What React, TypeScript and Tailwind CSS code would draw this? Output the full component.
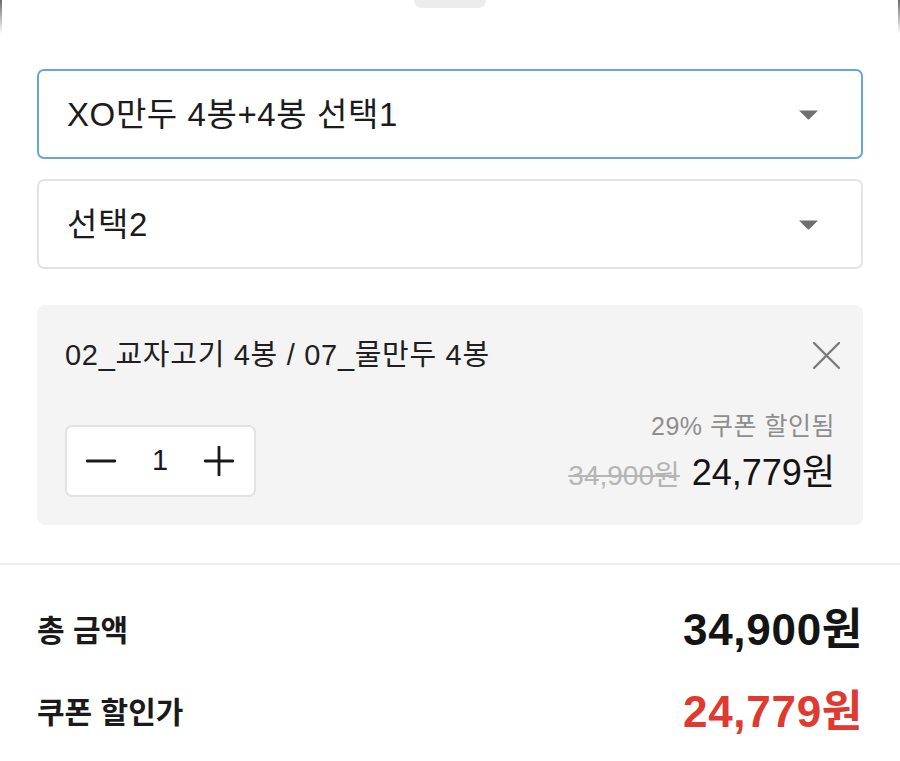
const font = {
  fontFamily: '"Liberation Sans", "Noto Sans CJK KR", "Noto Sans", sans-serif',
};

function SelectBox({ label, active }: { label: string; active?: boolean }) {
  return (
    <div
      className={
        active
          ? "flex h-[90px] items-center justify-between rounded-[7px] border-2 border-[#69a6d6] bg-white pl-[28px] pr-[42px]"
          : "flex h-[90px] items-center justify-between rounded-[7px] border-2 border-[#e3e3e3] bg-white pl-[28px] pr-[42px]"
      }
    >
      <span className="text-[33px] leading-none tracking-[0.6px] text-[#1c1c1c]">{label}</span>
      <svg width="21" height="11" viewBox="0 0 21 11">
        <path d="M1 1.5 L20 1.5 L11.2 10.2 Q10.5 10.9 9.8 10.2 Z" fill="#6f6f6f" />
      </svg>
    </div>
  );
}

function Stepper({ value }: { value: number }) {
  return (
    <div className="flex h-[72px] w-[191px] items-center justify-between rounded-[7px] border-2 border-[#e2e2e2] bg-white pl-[19px] pr-[20px]">
      <svg width="30" height="30" viewBox="0 0 30 30">
        <path d="M1 15 H29" stroke="#1a1a1a" strokeWidth="2.8" strokeLinecap="round" />
      </svg>
      <span className="text-[29px] text-[#1a1a1a]">{value}</span>
      <svg width="30" height="30" viewBox="0 0 30 30">
        <path d="M1 15 H29 M15 1 V29" stroke="#1a1a1a" strokeWidth="2.8" strokeLinecap="round" />
      </svg>
    </div>
  );
}

export default function App() {
  return (
    <div className="relative h-[761px] w-[900px] overflow-hidden bg-white" style={font}>
      {/* sheet edges fading into the backdrop */}
      <div className="absolute left-0 top-0 h-[34px] w-[2px] bg-gradient-to-b from-[#6a6a6a] to-transparent" />
      <div className="absolute right-0 top-0 h-[34px] w-[2px] bg-gradient-to-b from-[#6a6a6a] to-transparent" />

      {/* sheet handle */}
      <div className="flex justify-center">
        <div className="h-[8px] w-[72px] rounded-b-full bg-[#ececec]" />
      </div>

      <div className="px-[37px] pt-[61px]">
        <div className="flex flex-col gap-[20px]">
          <SelectBox label="XO만두 4봉+4봉 선택1" active />
          <SelectBox label="선택2" />
        </div>

        <div className="mt-[36px] flex h-[220px] flex-col justify-between rounded-[8px] bg-[#f4f4f4] pb-[28px] pl-[28px] pr-[23px] pt-[33px]">
          <div className="flex items-start justify-between">
            <span className="text-[29px] leading-[34px] tracking-[0.7px] text-[#1f1f1f]">
              02_교자고기 4봉 / 07_물만두 4봉
            </span>
            <svg width="27" height="27" viewBox="0 0 27 27" className="mt-[4px]">
              <path d="M1 1 L26 26 M26 1 L1 26" stroke="#7a7a7a" strokeWidth="2.3" strokeLinecap="round" />
            </svg>
          </div>

          <div className="flex items-end justify-between">
            <Stepper value={1} />
            <div className="mb-[3px] mr-[5px] flex flex-col items-end">
              <span className="text-[25px] leading-[30px] tracking-[0.5px] text-[#8e8e8e]">29% 쿠폰 할인됨</span>
              <div className="mt-[12px] flex items-baseline gap-[12px]">
                <span className="text-[28px] leading-[36px] text-[#b5b5b5] line-through decoration-[#b5b5b5]">
                  34,900원
                </span>
                <span className="text-[36px] leading-[40px] text-[#141414]">24,779원</span>
              </div>
            </div>
          </div>
        </div>
      </div>

      <div className="mt-[38px] h-[2px] bg-[#ececec]" />

      <div className="flex flex-col gap-[32px] px-[37px] pt-[40px]">
        <div className="flex h-[50px] items-center justify-between">
          <span className="text-[30px] font-bold text-[#1a1a1a]">총 금액</span>
          <span className="text-[44px] font-bold tracking-[0.7px] text-[#141414]">34,900원</span>
        </div>
        <div className="flex h-[50px] items-center justify-between">
          <span className="text-[30px] font-bold text-[#1a1a1a]">쿠폰 할인가</span>
          <span className="text-[44px] font-bold tracking-[0.7px] text-[#e03a30]">24,779원</span>
        </div>
      </div>
    </div>
  );
}
